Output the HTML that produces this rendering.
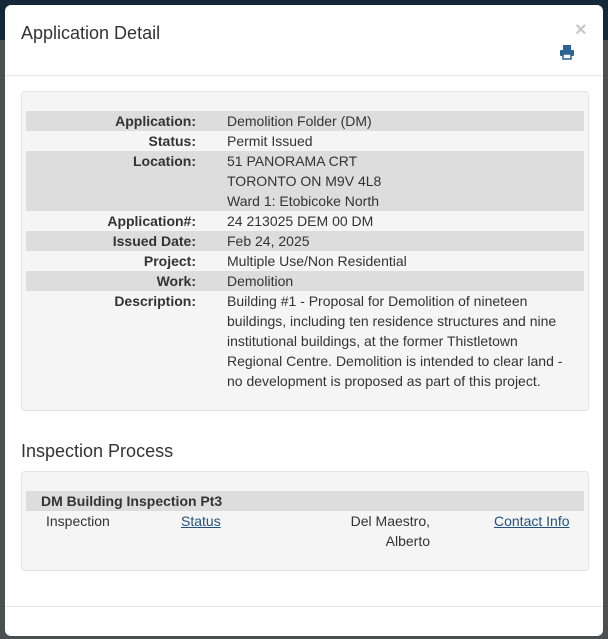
<!DOCTYPE html>
<html><head><meta charset="utf-8"><style>
*{box-sizing:border-box;margin:0;padding:0}
body{width:608px;height:639px;overflow:hidden;background:#4a4f52;font-family:"Liberation Sans",Arial,sans-serif;font-size:14px;color:#333;position:relative}
.topbar{position:absolute;left:0;top:0;width:608px;height:40px;background:#14283a}
.modal{position:absolute;left:5px;top:5px;width:598px;height:631px;background:#fff;border-radius:6px;overflow:hidden}
h4{position:absolute;left:16px;top:18px;font-size:18px;font-weight:normal;color:#333}
.close{position:absolute;left:570px;top:14px;font-size:20px;color:#c8c8c8;font-weight:bold}
.hr1{position:absolute;left:0;top:70px;width:598px;border-top:1px solid #e5e5e5}
.hr2{position:absolute;left:0;top:601px;width:598px;border-top:1px solid #e5e5e5}
.well{position:absolute;left:16px;background:#f5f5f5;border:1px solid #e3e3e3;border-radius:4px;width:568px}
.row{position:absolute;left:4px;width:558px;line-height:20px}
.g{background:#ddd}
.lab{position:absolute;left:0;width:170px;text-align:right;font-weight:bold}
.val{position:absolute;left:201px;width:357px;white-space:nowrap}
h3{position:absolute;left:16px;top:436px;font-size:18px;font-weight:normal;color:#333}
a{color:#23527c;text-decoration:underline}
</style></head><body>
<div class="topbar"></div>
<div class="modal">
<h4>Application Detail</h4>
<div class="close">×</div>
<svg style="position:absolute;left:554px;top:39px" width="16" height="16" viewBox="0 0 16 16"><rect x="4" y="1" width="8" height="5" fill="#2a6496"/><rect x="1" y="6" width="14" height="6" rx="1" fill="#2a6496"/><rect x="4" y="10" width="8" height="5" fill="#fff" stroke="#2a6496" stroke-width="1.5"/></svg>
<div class="hr1"></div>
<div class="well" style="top:86px;height:320px">
 <div class="row g" style="top:19px;height:20px"><span class="lab">Application:</span><span class="val">Demolition Folder (DM)</span></div>
 <div class="row" style="top:39px;height:20px"><span class="lab">Status:</span><span class="val">Permit Issued</span></div>
 <div class="row g" style="top:59px;height:60px"><span class="lab">Location:</span><span class="val">51 PANORAMA CRT<br>TORONTO ON M9V 4L8<br>Ward 1: Etobicoke North</span></div>
 <div class="row" style="top:119px;height:20px"><span class="lab">Application#:</span><span class="val">24 213025 DEM 00 DM</span></div>
 <div class="row g" style="top:139px;height:20px"><span class="lab">Issued Date:</span><span class="val">Feb 24, 2025</span></div>
 <div class="row" style="top:159px;height:20px"><span class="lab">Project:</span><span class="val">Multiple Use/Non Residential</span></div>
 <div class="row g" style="top:179px;height:20px"><span class="lab">Work:</span><span class="val">Demolition</span></div>
 <div class="row" style="top:199px;height:100px"><span class="lab">Description:</span><span class="val">Building #1 - Proposal for Demolition of nineteen<br>buildings, including ten residence structures and nine<br>institutional buildings, at the former Thistletown<br>Regional Centre. Demolition is intended to clear land -<br>no development is proposed as part of this project.</span></div>
</div>
<h3>Inspection Process</h3>
<div class="well" style="top:466px;height:100px">
 <div class="row g" style="top:19px;height:20px;font-weight:bold;padding-left:15px">DM Building Inspection Pt3</div>
 <div class="row" style="top:39px;height:40px">
  <span style="position:absolute;left:20px">Inspection</span>
  <a style="position:absolute;left:155px">Status</a>
  <span style="position:absolute;left:300px;width:104px;text-align:right">Del Maestro,<br>Alberto</span>
  <a style="position:absolute;left:468px">Contact Info</a>
 </div>
</div>
<div class="hr2"></div>
</div>
</body></html>
